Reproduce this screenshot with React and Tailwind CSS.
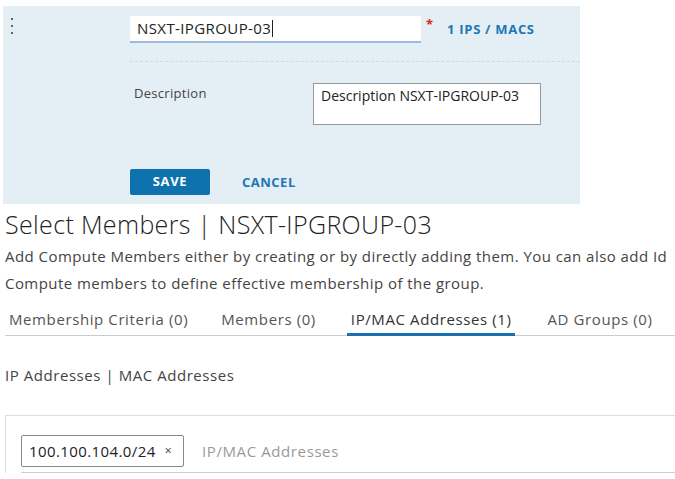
import React from "react";

export default function App() {
  const font = { fontFamily: '"Open Sans", "Liberation Sans", sans-serif' };
  return (
    <div className="w-[675px] h-[479px] overflow-hidden bg-white text-[#333]" style={font}>
      {/* Edit panel */}
      <div className="mt-[6px] ml-[3px] w-[577px] h-[198px] bg-[#e4eef5] flex">
        <div className="w-[127px] pt-[12px] pl-[8px] flex flex-col gap-[5px]">
          <span className="w-[2px] h-[2px] bg-[#666] block" />
          <span className="w-[2px] h-[2px] bg-[#666] block" />
          <span className="w-[2px] h-[2px] bg-[#666] block" />
        </div>
        <div className="flex-1 flex flex-col">
          <div className="flex items-start pt-[10px]">
            <div className="w-[291px] h-[27px] bg-white border-b-2 border-[#9cbcd9] pl-[7px] flex items-center text-[15px] tracking-[0.4px] text-[#222]">
              NSXT-IPGROUP-03<span className="w-px h-[17px] bg-[#222] ml-px" />
            </div>
            <span className="ml-[5px] text-[#e02020] text-[13px] font-bold leading-none mt-[2px]">*</span>
            <span className="ml-[14px] mt-[7px] text-[13px] font-bold text-[#1a78b5] leading-none tracking-[0.7px]">1 IPS / MACS</span>
          </div>
          <div className="mt-[18px] border-t border-dashed border-[#cfd8e0]" />
          <div className="flex mt-[21px]">
            <div className="w-[183px] pl-[4px] text-[13px] tracking-[0.3px] text-[#444] pt-px">Description</div>
            <div className="w-[228px] h-[42px] bg-white border border-[#999] pl-[7px] pt-[1px] text-[14px] text-[#222]">
              Description NSXT-IPGROUP-03
            </div>
          </div>
          <div className="flex items-center mt-[44px]">
            <button className="w-[80px] h-[26px] bg-[#0e72ae] rounded-[2px] text-white text-[13px] font-bold tracking-[0.6px]">
              SAVE
            </button>
            <button className="ml-[32px] mt-[2px] text-[#1a78b5] text-[13px] font-bold tracking-[0.5px]">CANCEL</button>
          </div>
        </div>
      </div>

      {/* Select members */}
      <div className="pl-[5px]">
        <h1 className="text-[25px] font-light leading-none mt-[8px] text-[#222] whitespace-nowrap tracking-[0.35px]">
          Select Members | NSXT-IPGROUP-03
        </h1>
        <p className="mt-[6px] text-[15px] leading-[27px] text-[#444] whitespace-nowrap tracking-[0.45px]">
          Add Compute Members either by creating or by directly adding them. You can also add Id
          <br />
          Compute members to define effective membership of the group.
        </p>
        <div className="mt-[12px] flex border-b border-[#ccc] text-[15px] leading-[20px] text-[#555] whitespace-nowrap tracking-[0.6px]">
          <div className="pl-[4px] pb-[6px] mr-[33px]">Membership Criteria (0)</div>
          <div className="pb-[6px] mr-[31px]">Members (0)</div>
          <div className="px-[4px] pb-[4px] border-b-[3px] border-[#1a6fb0] text-[#333] -mb-px mr-[32px]">IP/MAC Addresses (1)</div>
          <div className="pb-[6px]">AD Groups (0)</div>
        </div>
        <div className="mt-[29px] text-[15px] leading-[20px] text-[#444] tracking-[0.55px]">IP Addresses | MAC Addresses</div>
        <div className="mt-[30px] border-t border-l border-[#ddd] pl-[15px] pt-[19px]">
          <div className="flex items-center border-b border-[#ccc] pb-[5px]">
            <div className="h-[32px] w-[163px] border border-[#888] rounded-[2px] flex items-center pl-[7px] text-[15px] tracking-[0.4px] text-[#222]">
              100.100.104.0/24
              <span className="ml-[9px] text-[12px] text-[#333]">×</span>
            </div>
            <span className="ml-[18px] text-[15px] tracking-[0.6px] text-[#999]">IP/MAC Addresses</span>
          </div>
        </div>
      </div>
    </div>
  );
}
